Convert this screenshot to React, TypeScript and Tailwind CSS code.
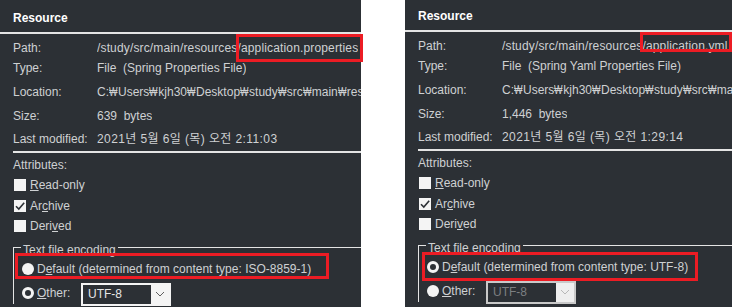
import React from "react";

type PanelProps = {
  headerH: string;
  type: string;
  size: string;
  modified: string;
  encoding: string;
  defaultFilled: boolean;
  otherEnabled: boolean;
  pathFile: string;
  className: string;
};

const Check = ({ checked }: { checked?: boolean }) => (
  <div className="w-[12px] h-[12px] bg-[#f4f4f4] flex items-center justify-center">
    {checked && (
      <svg width="12" height="12" viewBox="0 0 12 12">
        <path d="M2 6.2 L4.8 9 L10.2 2.8" fill="none" stroke="#2c3035" strokeWidth="1.6" />
      </svg>
    )}
  </div>
);

const Radio = ({ filled }: { filled: boolean }) =>
  filled ? (
    <div className="w-[12px] h-[12px] rounded-full bg-[#f4f4f4]" />
  ) : (
    <div className="w-[12px] h-[12px] rounded-full border-[3px] border-[#f4f4f4] bg-[#2c3035]" />
  );

const Row = ({
  label,
  children,
  className = "",
  valueClass = "",
}: {
  label: string;
  children: React.ReactNode;
  className?: string;
  valueClass?: string;
}) => (
  <div className={"flex items-center h-[20px] whitespace-pre " + className}>
    <div className="w-[84px] shrink-0">{label}</div>
    <div className={"whitespace-pre overflow-hidden " + valueClass}>{children}</div>
  </div>
);

const WonPath = ({ parts }: { parts: string[] }) => (
  <>
    {parts.map((s, i) => (
      <React.Fragment key={i}>
        {i > 0 && (
          <span className="inline-block w-[9px] overflow-hidden align-top">
            <span className="inline-block scale-x-75 origin-left">₩</span>
          </span>
        )}
        {s}
      </React.Fragment>
    ))}
  </>
);

const Panel = (p: PanelProps) => (
  <div className={"bg-[#2c3035] text-[#cfd1d3] overflow-hidden flex flex-col " + p.className}>
    <div className={"flex items-center pl-[13px] font-bold text-white text-[12px] " + p.headerH}>Resource</div>
    <div className="h-[2px] bg-[#e4e4e4]" />
    <div className="pl-[13px] flex flex-col">
      <Row className="mt-[4px]" valueClass="tracking-[0.15px]" label="Path:">
        {"/study/src/main/resources/" + p.pathFile}
      </Row>
      <Row label="Type:">{p.type}</Row>
      <Row className="mt-[4px]" label="Location:">
        <WonPath parts={["C:", "Users", "kjh30", "Desktop", "study", "src", "main", "resources", p.pathFile]} />
      </Row>
      <Row className="mt-[4px]" label="Size:">{p.size}</Row>
      <Row className="mt-[3px]" valueClass="tracking-[0.4px]" label="Last modified:">
        {p.modified}
      </Row>
      <div className="h-[2px] bg-[#e4e4e4] mt-[2px]" />
      <div className="h-[20px] flex items-center mt-[2px]">Attributes:</div>
      <div className="h-[20px] flex items-center gap-[4px] pl-[1px]">
        <Check />
        <span><span className="underline">R</span>ead-only</span>
      </div>
      <div className="h-[20px] flex items-center gap-[4px] pl-[1px] mt-[1px]">
        <Check checked />
        <span>Ar<span className="underline">c</span>hive</span>
      </div>
      <div className="h-[20px] flex items-center gap-[4px] pl-[1px]">
        <Check />
        <span>Deri<span className="underline">v</span>ed</span>
      </div>
      <div className="flex h-[16px] mt-[5px]">
        <div className="w-[8px] h-[10px] self-end border-t border-l border-[#e4e4e4]" />
        <div className="px-[2px] leading-[16px] mt-[1px]">Text file encoding</div>
        <div className="flex-1 h-[10px] self-end border-t border-[#e4e4e4]" />
      </div>
      <div className="border-l border-[#e4e4e4] pl-[8px] flex flex-col">
        <div className="h-[20px] flex items-center gap-[3px] mt-[2px]">
          <Radio filled={p.defaultFilled} />
          <span>
            D<span className="underline">e</span>fault (determined from content type: {p.encoding})
          </span>
        </div>
        <div className="h-[22px] flex items-center mt-[3px]">
          <Radio filled={!p.defaultFilled} />
          <span className="ml-[3px] w-[44px]">
            <span className="underline">O</span>ther:
          </span>
          <div
            className={
              "w-[90px] h-[23px] flex mt-[2px] border-2 " +
              (p.otherEnabled ? "border-[#f4f4f4]" : "border-[#c9c9c9]")
            }
          >
            <div
              className={
                "flex-1 bg-[#2c3035] flex items-center pl-[5px] " +
                (p.otherEnabled ? "text-[#e6e6e6]" : "text-[#7c7f82]")
              }
            >
              UTF-8
            </div>
            <div className={"w-[18px] flex items-center justify-center " + (p.otherEnabled ? "bg-[#f4f4f4]" : "bg-[#eeeeee]")}>
              <svg width="10" height="6" viewBox="0 0 10 6">
                <path d="M1 1 L5 5 L9 1" fill="none" stroke={p.otherEnabled ? "#606060" : "#b8b8b8"} strokeWidth="1" />
              </svg>
            </div>
          </div>
        </div>
      </div>
    </div>
  </div>
);

export default function App() {
  return (
    <div
      className="relative w-[732px] h-[307px] overflow-hidden bg-white flex text-[12px]"
      style={{ fontFamily: '"Liberation Sans", "Noto Sans CJK KR", sans-serif' }}
    >
      <Panel
        className="w-[361px] h-[307px]"
        headerH="h-[32px] pt-[3px]"
        pathFile="application.properties"
        type="File  (Spring Properties File)"
        size="639  bytes"
        modified="2021년 5월 6일 (목) 오전 2:11:03"
        encoding="ISO-8859-1"
        defaultFilled={true}
        otherEnabled={true}
      />
      <div className="w-[44px] shrink-0" />
      <Panel
        className="flex-1 h-[307px]"
        headerH="h-[30px] pt-[1px]"
        pathFile="application.yml"
        type="File  (Spring Yaml Properties File)"
        size="1,446  bytes"
        modified="2021년 5월 6일 (목) 오전 1:29:14"
        encoding="UTF-8"
        defaultFilled={false}
        otherEnabled={false}
      />
      <div className="absolute left-[236px] top-[34px] w-[127px] h-[28px] border-[3px] border-[#ec1c24]" />
      <div className="absolute left-[15px] top-[253px] w-[314px] h-[26px] border-[3px] border-[#ec1c24]" />
      <div className="absolute left-[640px] top-[32px] w-[92px] h-[20px] border-[3px] border-[#ec1c24]" />
      <div className="absolute left-[422px] top-[252px] w-[276px] h-[29px] border-[3px] border-[#ec1c24]" />
    </div>
  );
}
